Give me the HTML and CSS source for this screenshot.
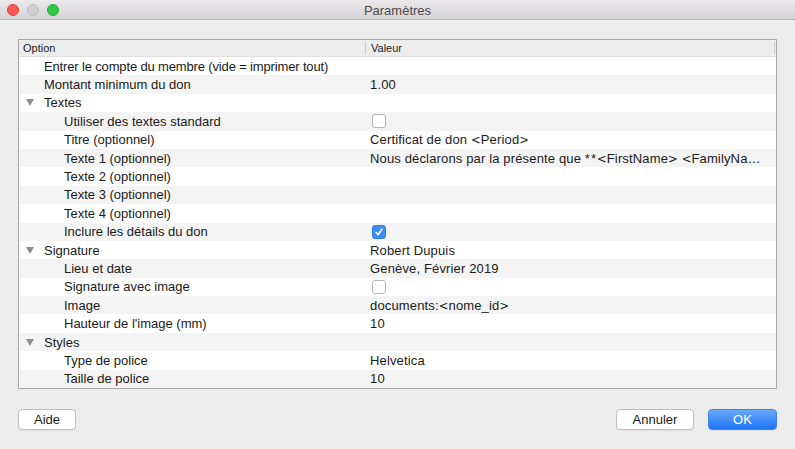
FILE: index.html
```html
<!DOCTYPE html>
<html lang="fr">
<head>
<meta charset="utf-8">
<title>Paramètres</title>
<link rel="stylesheet" href="styles.css">
</head>
<body>
<div class="window">
  <div class="titlebar">
    <div class="lights">
      <span class="light red"></span>
      <span class="light grey"></span>
      <span class="light green"></span>
    </div>
    <div class="title">Paramètres</div>
  </div>
  <div class="content">
    <div class="table">
      <div class="thead">
        <div class="th th-opt">Option</div>
        <div class="th th-val">Valeur</div>
      </div>
      <div class="tbody">
        <div class="row"><div class="opt l0 tight">Entrer le compte du membre (vide = imprimer tout)</div><div class="val"></div></div>
        <div class="row"><div class="opt l0">Montant minimum du don</div><div class="val">1.00</div></div>
        <div class="row"><div class="opt l0"><span class="tri"></span>Textes</div><div class="val"></div></div>
        <div class="row"><div class="opt l1">Utiliser des textes standard</div><div class="val"><span class="cb"></span></div></div>
        <div class="row"><div class="opt l1">Titre (optionnel)</div><div class="val">Certificat de don <span class="ang">&lt;</span>Period<span class="ang">&gt;</span></div></div>
        <div class="row"><div class="opt l1">Texte 1 (optionnel)</div><div class="val">Nous déclarons par la présente que <span class="ast">**</span><span class="ang">&lt;</span>FirstName<span class="ang">&gt;</span> <span class="ang">&lt;</span>FamilyNa…</div></div>
        <div class="row"><div class="opt l1">Texte 2 (optionnel)</div><div class="val"></div></div>
        <div class="row"><div class="opt l1">Texte 3 (optionnel)</div><div class="val"></div></div>
        <div class="row"><div class="opt l1">Texte 4 (optionnel)</div><div class="val"></div></div>
        <div class="row"><div class="opt l1">Inclure les détails du don</div><div class="val"><span class="cb checked"><svg width="10" height="10" viewBox="0 0 10 10"><path d="M2 5.3 L4.1 7.6 L8 2.2" fill="none" stroke="#fff" stroke-width="1.6" stroke-linecap="round" stroke-linejoin="round"/></svg></span></div></div>
        <div class="row"><div class="opt l0"><span class="tri"></span>Signature</div><div class="val">Robert Dupuis</div></div>
        <div class="row"><div class="opt l1">Lieu et date</div><div class="val">Genève, Février 2019</div></div>
        <div class="row"><div class="opt l1">Signature avec image</div><div class="val"><span class="cb"></span></div></div>
        <div class="row"><div class="opt l1">Image</div><div class="val">documents:<span class="ang">&lt;</span>nome_id<span class="ang">&gt;</span></div></div>
        <div class="row"><div class="opt l1">Hauteur de l'image (mm)</div><div class="val">10</div></div>
        <div class="row"><div class="opt l0"><span class="tri"></span>Styles</div><div class="val"></div></div>
        <div class="row"><div class="opt l1">Type de police</div><div class="val">Helvetica</div></div>
        <div class="row"><div class="opt l1">Taille de police</div><div class="val">10</div></div>
      </div>
    </div>
    <div class="buttons">
      <button class="btn">Aide</button>
      <div class="spacer"></div>
      <button class="btn">Annuler</button>
      <button class="btn primary">OK</button>
    </div>
  </div>
</div>
</body>
</html>
```

FILE: styles.css
```css
* { box-sizing: border-box; }
html, body {
  margin: 0;
  padding: 0;
  width: 795px;
  height: 449px;
  overflow: hidden;
  background: #ececec;
  font-family: "Liberation Sans", Arial, sans-serif;
  color: #1a1a1a;
}
.window {
  width: 795px;
  height: 449px;
  display: flex;
  flex-direction: column;
}
.titlebar {
  height: 20px;
  flex: none;
  position: relative;
  background: linear-gradient(#ebe9eb, #d5d3d5);
  border-bottom: 1px solid #b5b3b5;
  display: flex;
  align-items: center;
  justify-content: center;
}
.lights {
  position: absolute;
  left: 7px;
  top: 4px;
  display: flex;
  gap: 8px;
}
.light {
  width: 12px;
  height: 12px;
  border-radius: 50%;
}
.light.red { background: #fc5753; border: 1px solid #df3e3a; }
.light.grey { background: #d0ced0; border: 1px solid #bdbbbd; }
.light.green { background: #33c748; border: 1px solid #27aa35; }
.title {
  font-size: 13px;
  color: #4a4a4a;
  margin-top: 1px;
}
.content {
  flex: 1;
  padding: 19px 18px 0 18px;
  display: flex;
  flex-direction: column;
}
.table {
  border: 1px solid #a9a9a9;
  background: #fff;
  width: 759px;
}
.thead {
  height: 17px;
  display: flex;
  background: #ececec;
  font-size: 11px;
  color: #222;
  border-bottom: 1px solid #e0e0e0;
}
.th {
  display: flex;
  align-items: center;
  padding-left: 4px;
}
.th-opt { width: 346px; }
.th-val {
  flex: 1;
  border-left: 1px solid #c8c8c8;
  margin: 2px 0;
  padding-left: 5px;
  border-right: 1px solid #c8c8c8;
  margin-right: 1px;
}
.tbody {
  display: flex;
  flex-direction: column;
}
.row {
  height: 18.4px;
  display: flex;
  align-items: center;
  font-size: 13px;
}
.row:nth-child(even) { background: #f4f4f4; }
.opt {
  width: 346px;
  display: flex;
  align-items: center;
  white-space: nowrap;
}
.opt.tight { letter-spacing: -0.15px; }
.opt.l0 { padding-left: 25px; }
.opt.l1 { padding-left: 45px; }
.val {
  flex: 1;
  padding-left: 5px;
  white-space: nowrap;
  overflow: hidden;
  line-height: 18px;
  padding-top: 1px;
  letter-spacing: 0.15px;
}
.ang {
  font-family: "DejaVu Sans", sans-serif;
  font-size: 11.5px;
}
.ast { letter-spacing: 1px; }
.tri {
  width: 0;
  height: 0;
  border-left: 4px solid transparent;
  border-right: 4px solid transparent;
  border-top: 7px solid #8c8c8c;
  margin-left: -18px;
  margin-right: 10px;
}
.cb {
  width: 14px;
  height: 14px;
  border: 1px solid #b4b4b4;
  border-radius: 3px;
  background: #fff;
  margin-left: 2px;
  display: inline-flex;
  vertical-align: middle;
  align-items: center;
  justify-content: center;
  position: relative;
  top: -1px;
}
.cb.checked {
  background: #3a8ef6;
  border-color: #2f7fe8;
}
.buttons {
  margin-top: 20px;
  display: flex;
  align-items: center;
}
.spacer { flex: 1; }
.btn {
  height: 21px;
  font-family: "Liberation Sans", Arial, sans-serif;
  font-size: 13px;
  color: #1a1a1a;
  background: #fff;
  border: 1px solid #c0c0c0;
  border-radius: 4px;
  padding: 0 14px;
  box-shadow: 0 0.5px 0 rgba(0,0,0,0.1);
}
.btn:first-child { width: 58px; padding: 0; }
.btn + .spacer + .btn { width: 78px; padding: 0; }
.btn.primary {
  width: 69px;
  margin-left: 14px;
  padding: 0;
  color: #fff;
  background: linear-gradient(#68a9f9, #1e74f5);
  border-color: #3b84ef;
}
```
